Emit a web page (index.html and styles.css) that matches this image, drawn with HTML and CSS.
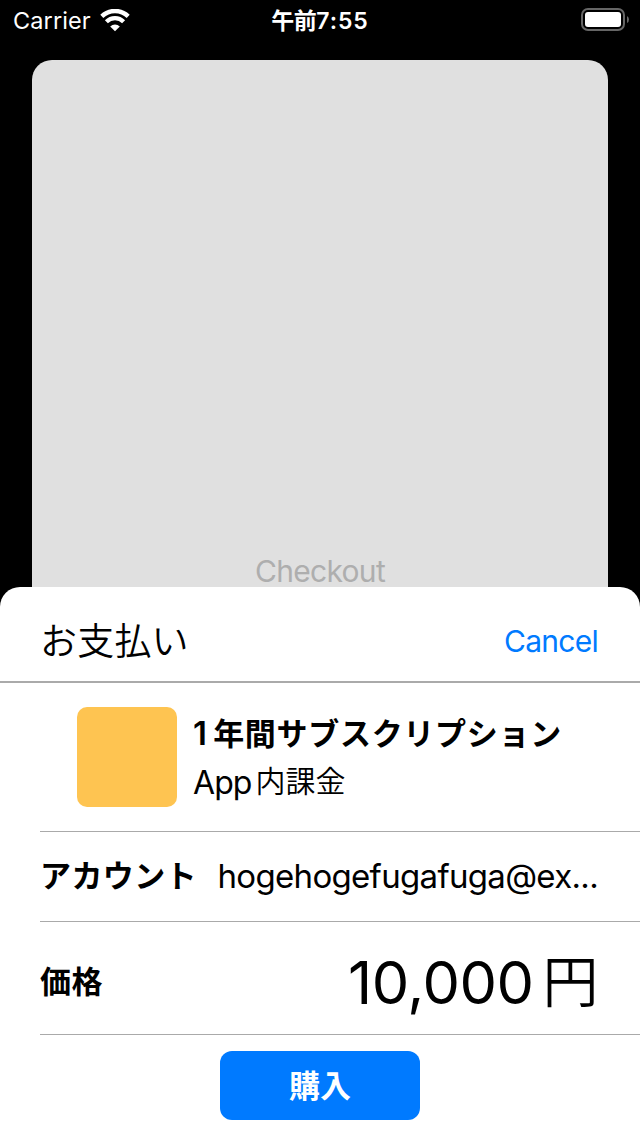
FILE: index.html
```html
<!DOCTYPE html>
<html lang="ja">
<head>
<meta charset="utf-8">
<title>お支払い</title>
<link rel="stylesheet" href="styles.css">
</head>
<body>
<div class="screen">
  <header class="status">
    <div class="carrier"><span>Carrier</span>
      <svg class="wifi" width="30" height="23" viewBox="0 0 30 23">
        <path d="M1.8 7.3A19 19 0 0 1 28.2 7.3" fill="none" stroke="#fff" stroke-width="4.4"/>
        <path d="M6.4 12.8A12 12 0 0 1 23.6 12.8" fill="none" stroke="#fff" stroke-width="4.2"/>
        <path d="M10.2 17.4A7 7 0 0 1 19.8 17.4L15 22.2Z" fill="#fff"/>
      </svg>
    </div>
    <div class="clock"><span class="clock-period">午前</span><span>7:55</span></div>
    <svg class="battery" width="49" height="24" viewBox="0 0 49 24">
      <rect x="2" y="1" width="42" height="21" rx="6" fill="none" stroke="#666" stroke-width="2"/>
      <rect x="5" y="4" width="36" height="15" rx="3" fill="#fff"/>
      <path d="M47 8Q49 9 49 11.5T47 15Z" fill="#666"/>
    </svg>
  </header>
  <main class="backdrop"><span class="checkout">Checkout</span></main>
  <section class="sheet">
    <header class="sheet-header">
      <h1 class="title">お支払い</h1>
      <a class="cancel">Cancel</a>
    </header>
    <div class="product">
      <div class="thumb"></div>
      <div class="product-text">
        <div class="product-name"><span class="one">1</span>年間サブスクリプション</div>
        <div class="product-kind"><span class="app">App</span><span class="kind-ja">内課金</span></div>
      </div>
    </div>
    <div class="row account">
      <span class="label">アカウント</span>
      <span class="email">hogehogefugafuga@ex...</span>
    </div>
    <div class="row price">
      <span class="label">価格</span>
      <span class="amount">10,000<span class="yen">円</span></span>
    </div>
    <footer class="footer"><button class="buy">購入</button></footer>
  </section>
</div>
</body>
</html>
```
FILE: styles.css
```css
* { box-sizing: border-box; }
body { margin: 0; background: #000; font-family: Inter, "Noto Sans CJK JP", sans-serif; color: #000; }
.screen { width: 640px; height: 1136px; display: flex; flex-direction: column; overflow: hidden; }
.status { height: 60px; display: grid; grid-template-columns: 1fr auto 1fr; align-items: start; color: #fff; font-size: 24px; line-height: 40px; }
.carrier { display: flex; padding-left: 13px; gap: 9px; font-size: 23.5px; letter-spacing: .1px; line-height: 42px; }
.wifi { margin-top: 9px; }
.clock { display: flex; font-weight: 600; font-size: 23px; letter-spacing: .9px; line-height: 42px; }
.clock-period { font-size: 23px; font-weight: 600; letter-spacing: -.5px; }
.battery { justify-self: end; margin: 8px 11px 0 0; }
.backdrop { height: 527px; margin: 0 32px; background: #e0e0e0; border-radius: 20px 20px 0 0; display: flex; align-items: flex-end; justify-content: center; }
.checkout { color: #aeaeae; font-size: 30px; line-height: 32px; letter-spacing: -.7px; }
.sheet { height: 549px; background: #fff; border-radius: 20px 20px 0 0; display: flex; flex-direction: column; }
.sheet-header { height: 96px; border-bottom: 2px solid #aaa; padding: 14px 42px 0 40px; display: flex; justify-content: space-between; line-height: 81px; }
.title { margin: 0; font-size: 37px; font-weight: 350; line-height: 82px; letter-spacing: .2px; }
.cancel { color: #007aff; font-size: 30px; letter-spacing: -.75px; }
.product { height: 149px; margin-left: 40px; padding: 24px 0 0 37px; border-bottom: 1px solid #aaa; display: flex; gap: 16px; }
.thumb { width: 100px; height: 100px; border-radius: 10px; background: #fec451; }
.product-name { font-size: 31px; font-weight: 700; line-height: 52px; white-space: nowrap; letter-spacing: .7px; }
.one { font-weight: 600; font-size: 33px; margin-right: 5.5px; }
.product-kind { font-size: 32px; line-height: 45px; display: flex; gap: 4px; }
.app { letter-spacing: -.9px; }
.kind-ja { font-size: 30px; font-weight: 350; line-height: 43px; }
.row { margin-left: 40px; padding-right: 42px; border-bottom: 1px solid #aaa; display: flex; align-items: center; justify-content: space-between; white-space: nowrap; }
.account { height: 90px; }
.account .label { padding-bottom: 2px; }
.price { height: 113px; padding-top: 8px; }
.label { font-size: 31px; font-weight: 700; line-height: 40px; letter-spacing: .4px; }
.email { font-size: 33px; line-height: 40px; letter-spacing: -.68px; padding-bottom: 2px; }
.amount { font-size: 59.5px; line-height: 78px; letter-spacing: -.5px; display: flex; gap: 9px; }
.yen { font-size: 56px; font-weight: 350; }
.footer { padding-top: 16px; display: flex; justify-content: center; }
.buy { width: 200px; height: 69px; padding: 0; border: 0; border-radius: 12px; background: #007aff; color: #fff; font: 700 31px/69px Inter, "Noto Sans CJK JP", sans-serif; }
```
